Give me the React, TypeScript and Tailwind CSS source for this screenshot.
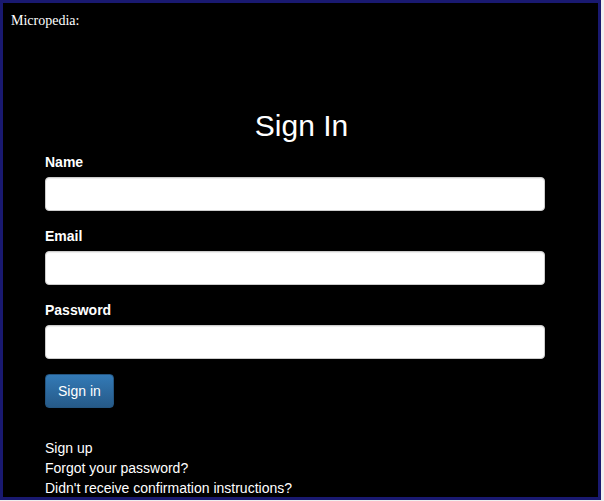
import React from 'react';

const fields = ['Name', 'Email', 'Password'];

const App = () => {
  return (
    <div className="w-[604px] h-[501px] bg-[#f0f0f0]">
      <div className="w-[601px] h-[500px] border-[3px] border-[#191970] bg-black text-white overflow-hidden font-['Liberation_Sans',Arial,sans-serif] text-[14px] leading-[20px]">
        <div className="px-[8px] pt-[10px] h-[86px] font-['Liberation_Serif','Times_New_Roman',serif] text-[14px] leading-[16px]">
          Micropedia:
        </div>
        <h2 className="mt-[20px] mb-[10px] text-[30px] leading-[33px] text-center pl-[2px]">Sign In</h2>
        <form className="ml-[42px] w-[500px]" onSubmit={(e) => e.preventDefault()}>
          {fields.map((f) => (
            <div key={f} className="mb-[15px]">
              <label className="block mb-[5px] font-bold">{f}</label>
              <input
                type={f === 'Password' ? 'password' : f === 'Email' ? 'email' : 'text'}
                className="block w-full h-[34px] rounded-[4px] border border-[#ccc] bg-white px-3 text-[#555] shadow-[inset_0_1px_1px_rgba(0,0,0,0.075)] outline-none"
              />
            </div>
          ))}
          <button
            type="submit"
            className="h-[34px] px-3 rounded-[4px] border border-[#245580] bg-gradient-to-b from-[#337ab7] to-[#265a88] text-white text-[14px] leading-[20px]"
          >
            Sign in
          </button>
        </form>
        <div className="ml-[42px] mt-[30px] flex flex-col">
          <a href="#">Sign up</a>
          <a href="#">Forgot your password?</a>
          <a href="#">Didn't receive confirmation instructions?</a>
        </div>
      </div>
    </div>
  );
};

export default App;
